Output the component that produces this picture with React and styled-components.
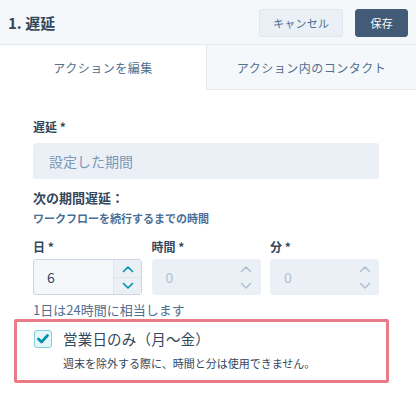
import React from 'react';
import styled, { createGlobalStyle } from 'styled-components';

const Global = createGlobalStyle`
  body {
    margin: 0;
    background: #fff;
    font-family: "Noto Sans CJK JP", "Noto Sans", sans-serif;
    color: #33475b;
  }
`;

const Panel = styled.div`
  width: 416px;
  height: 398px;
  overflow: hidden;
  background: #fff;
`;

const Header = styled.div`
  height: 45px;
  box-sizing: border-box;
  display: flex;
  align-items: center;
  padding: 0 8px;
  background: #f5f8fa;
  border-bottom: 1px solid #e3e8ed;
`;

const Title = styled.div`
  flex: 1;
  font-size: 15px;
  font-weight: 700;
  color: #33475b;
  padding-top: 1px;
`;

const Button = styled.button`
  height: 28px;
  box-sizing: border-box;
  border-radius: 3px;
  font-family: inherit;
  font-size: 11px;
  letter-spacing: 0.3px;
  padding: 0 ${(p) => (p.primary ? '14px' : '13px')};
  margin-left: ${(p) => (p.primary ? '12px' : '0')};
  border: 1px solid ${(p) => (p.primary ? '#425b76' : '#dfe5ec')};
  background: ${(p) => (p.primary ? '#425b76' : '#eaf0f6')};
  color: ${(p) => (p.primary ? '#fff' : '#506e91')};
  line-height: 26px;
  margin-top: 1px;
`;

const Tabs = styled.div`
  display: grid;
  grid-template-columns: 206px 1fr;
  height: 45px;
`;

const Tab = styled.div`
  display: flex;
  align-items: center;
  justify-content: center;
  font-size: 12px;
  color: #516f90;
  letter-spacing: 0.5px;
  background: ${(p) => (p.active ? '#fff' : '#f5f8fa')};
  border-left: ${(p) => (p.active ? 'none' : '1px solid #e3e8ed')};
  border-bottom: ${(p) => (p.active ? 'none' : '1px solid #e3e8ed')};
`;

const Body = styled.div`
  padding: 28px 37px 0 33px;
`;

const Label = styled.div`
  font-size: 12px;
  font-weight: 700;
  color: #33475b;
  height: 18px;
  line-height: 18px;
`;

const TextInput = styled.div`
  margin-top: 7px;
  height: 36px;
  border-radius: 3px;
  background: #eaf0f6;
  display: flex;
  align-items: center;
  padding-left: 16px;
  font-size: 14px;
  color: #7c98b6;
`;

const Sub = styled.div`
  margin-top: 3px;
  font-size: 11px;
  font-weight: 700;
  color: #4a6f96;
`;

const SectionLabel = styled(Label)`
  margin-top: 10px;
  font-size: 13px;
`;

const NumberRow = styled.div`
  margin-top: 12px;
  display: grid;
  grid-template-columns: 109px 109px 109px;
  column-gap: 9.5px;
`;

const Field = styled.div`
  display: flex;
  flex-direction: column;
`;

const NumBox = styled.div`
  margin-top: 3px;
  height: 36px;
  box-sizing: border-box;
  border-radius: 3px;
  display: grid;
  grid-template-columns: 1fr 28px;
  background: ${(p) => (p.disabled ? '#eaf0f6' : '#f5f8fa')};
  border: 1px solid ${(p) => (p.disabled ? '#eaf0f6' : '#cbd6e2')};
`;

const NumValue = styled.div`
  display: flex;
  align-items: center;
  padding-left: 13px;
  font-size: 14px;
  color: ${(p) => (p.disabled ? '#b0c1d4' : '#33475b')};
`;

const Spinner = styled.div`
  display: grid;
  grid-template-rows: 1fr 1fr;
  border-left: 1px solid ${(p) => (p.disabled ? 'transparent' : '#dfe5ec')};
  background: ${(p) => (p.disabled ? 'transparent' : '#eaf0f6')};
  & > div + div {
    border-top: 1px solid ${(p) => (p.disabled ? 'transparent' : '#dfe5ec')};
  }
`;

const Arrow = styled.div`
  display: flex;
  align-items: center;
  justify-content: center;
`;

const Hint = styled.div`
  margin-top: 5px;
  font-size: 13px;
  color: #516f90;
`;

const Highlight = styled.div`
  margin: 0 27px 0 14px;
  height: 64px;
  box-sizing: border-box;
  border: 3px solid #ea7c88;
  border-radius: 2px;
  padding: 6px 0 0 17px;
`;

const CheckRow = styled.div`
  display: flex;
  align-items: center;
`;

const Check = styled.div`
  width: 18px;
  height: 18px;
  box-sizing: border-box;
  border: 1px solid #7fd1de;
  border-radius: 3px;
  background: #e5f5f8;
  display: flex;
  align-items: center;
  justify-content: center;
`;

const CheckText = styled.div`
  margin-left: 11px;
  font-size: 14.5px;
  color: #33475b;
  letter-spacing: 0.2px;
`;

const CheckSub = styled.div`
  margin: 6px 0 0 29px;
  font-size: 11px;
  color: #33475b;
`;

const Chevron = ({ up, color }) => (
  <svg width="12" height="8" viewBox="0 0 12 8">
    <path
      d={up ? 'M1.5 6.5 L6 2 L10.5 6.5' : 'M1.5 1.5 L6 6 L10.5 1.5'}
      fill="none"
      stroke={color}
      strokeWidth="1.6"
      strokeLinecap="round"
      strokeLinejoin="round"
    />
  </svg>
);

const NumberField = ({ label, value, disabled }) => {
  const c = disabled ? '#b0c1d4' : '#0091ae';
  return (
    <Field>
      <Label>{label} *</Label>
      <NumBox disabled={disabled}>
        <NumValue disabled={disabled}>{value}</NumValue>
        <Spinner disabled={disabled}>
          <Arrow><Chevron up color={c} /></Arrow>
          <Arrow><Chevron color={c} /></Arrow>
        </Spinner>
      </NumBox>
    </Field>
  );
};

const App = () => (
  <Panel>
    <Global />
    <Header>
      <Title>1. 遅延</Title>
      <Button>キャンセル</Button>
      <Button primary>保存</Button>
    </Header>
    <Tabs>
      <Tab active>アクションを編集</Tab>
      <Tab>アクション内のコンタクト</Tab>
    </Tabs>
    <Body>
      <Label>遅延 *</Label>
      <TextInput>設定した期間</TextInput>
      <SectionLabel>次の期間遅延：</SectionLabel>
      <Sub>ワークフローを続行するまでの時間</Sub>
      <NumberRow>
        <NumberField label="日" value="6" />
        <NumberField label="時間" value="0" disabled />
        <NumberField label="分" value="0" disabled />
      </NumberRow>
      <Hint>1日は24時間に相当します</Hint>
    </Body>
    <Highlight>
      <CheckRow>
        <Check>
          <svg width="12" height="10" viewBox="0 0 12 10">
            <path d="M1.5 5 L4.5 8 L10.5 1.5" fill="none" stroke="#0091ae" strokeWidth="2.6" strokeLinecap="round" strokeLinejoin="round" />
          </svg>
        </Check>
        <CheckText>営業日のみ（月〜金）</CheckText>
      </CheckRow>
      <CheckSub>週末を除外する際に、時間と分は使用できません。</CheckSub>
    </Highlight>
  </Panel>
);

export default App;
